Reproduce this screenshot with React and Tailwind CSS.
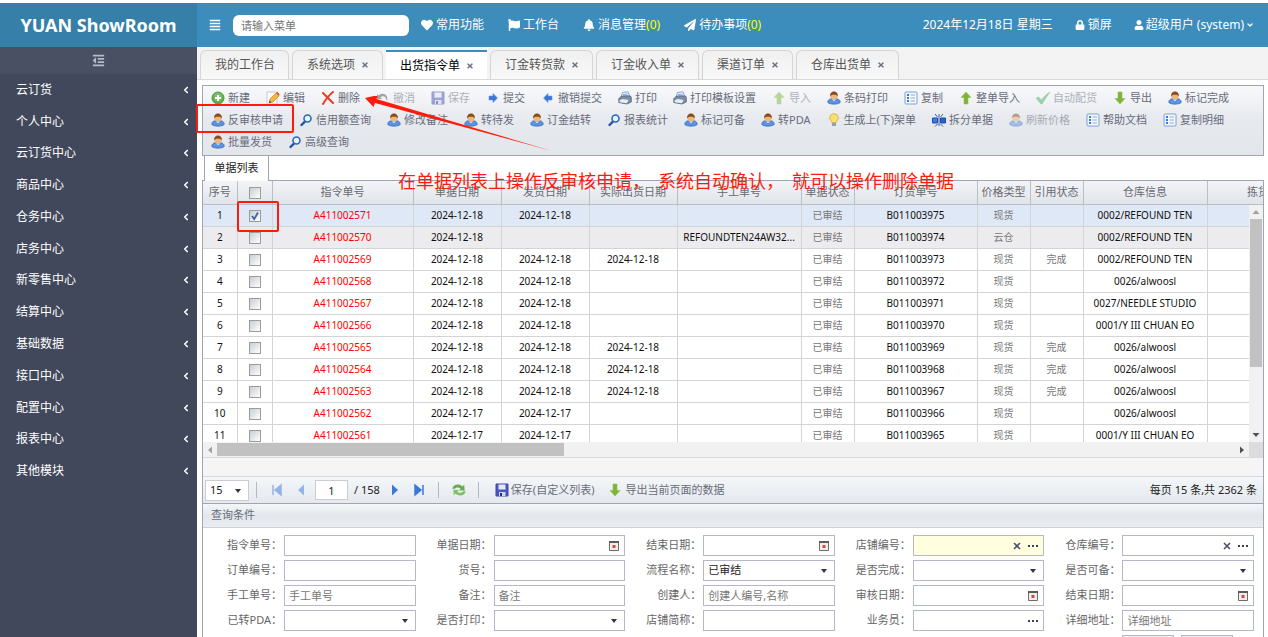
import React, { useState } from 'react';
import {
    FaAlignJustify, FaHeart, FaFlag, FaBell, FaPaperPlane, FaLock, FaUser, FaOutdent, FaTimes,
} from 'react-icons/fa';
import { ChevronDown, ChevronLeft } from 'lucide-react';

const menus = [
    '云订货', '个人中心', '云订货中心', '商品中心', '仓务中心', '店务中心', '新零售中心',
    '结算中心', '基础数据', '接口中心', '配置中心', '报表中心', '其他模块',
];

const tabs = ['我的工作台', '系统选项', '出货指令单', '订金转货款', '订金收入单', '渠道订单', '仓库出货单'];

const tools = [
    ['add', '新建'], ['edit', '编辑'], ['del', '删除'], ['undo', '撤消', true], ['save', '保存', true],
    ['right', '提交'], ['left', '撤销提交'], ['print', '打印'], ['print', '打印模板设置'], ['up', '导入', true],
    ['user', '条码打印'], ['list', '复制'], ['up', '整单导入'], ['check', '自动配货', true], ['down', '导出'],
    ['user', '标记完成'], ['user', '反审核申请'], ['search', '信用额查询'], ['user', '修改备注'],
    ['user', '转待发'], ['user', '订金结转'], ['search', '报表统计'], ['user', '标记可备'], ['user', '转PDA'],
    ['bulb', '生成上(下)架单'], ['split', '拆分单据'], ['user', '刷新价格', true], ['list', '帮助文档'],
    ['list', '复制明细'], ['user', '批量发货'], ['search', '高级查询'],
];

const columns = [
    '指令单号', '单据日期', '发货日期', '实际出货日期', '手工单号', '单据状态', '订货单号',
    '价格类型', '引用状态', '仓库信息', '拣货单号',
];

const rows = [
    ['A411002571', '2024-12-18', '2024-12-18', '', '', 'B011003975', '现货', '', '0002/REFOUND TEN'],
    ['A411002570', '2024-12-18', '', '', 'REFOUNDTEN24AW32...', 'B011003974', '云仓', '', '0002/REFOUND TEN'],
    ['A411002569', '2024-12-18', '2024-12-18', '2024-12-18', '', 'B011003973', '现货', '完成', '0002/REFOUND TEN'],
    ['A411002568', '2024-12-18', '2024-12-18', '', '', 'B011003972', '现货', '', '0026/alwoosl'],
    ['A411002567', '2024-12-18', '2024-12-18', '', '', 'B011003971', '现货', '', '0027/NEEDLE STUDIO'],
    ['A411002566', '2024-12-18', '2024-12-18', '', '', 'B011003970', '现货', '', '0001/Y III CHUAN EO'],
    ['A411002565', '2024-12-18', '2024-12-18', '2024-12-18', '', 'B011003969', '现货', '完成', '0026/alwoosl'],
    ['A411002564', '2024-12-18', '2024-12-18', '2024-12-18', '', 'B011003968', '现货', '完成', '0026/alwoosl'],
    ['A411002563', '2024-12-18', '2024-12-18', '2024-12-18', '', 'B011003967', '现货', '完成', '0026/alwoosl'],
    ['A411002562', '2024-12-17', '2024-12-17', '', '', 'B011003966', '现货', '', '0026/alwoosl'],
    ['A411002561', '2024-12-17', '2024-12-17', '', '', 'B011003965', '现货', '', '0001/Y III CHUAN EO'],
];

const fields = [
    { label: '指令单号' }, { label: '单据日期', kind: 'date' }, { label: '结束日期', kind: 'date' },
    { label: '店铺编号', kind: 'pick', clear: true, active: true }, { label: '仓库编号', kind: 'pick', clear: true },
    { label: '订单编号' }, { label: '货号' }, { label: '流程名称', kind: 'select', value: '已审结' },
    { label: '是否完成', kind: 'select' }, { label: '是否可备', kind: 'select' },
    { label: '手工单号', hint: '手工单号' }, { label: '备注', hint: '备注' }, { label: '创建人', hint: '创建人编号,名称' },
    { label: '审核日期', kind: 'date' }, { label: '结束日期', kind: 'date' },
    { label: '已转PDA', kind: 'select' }, { label: '是否打印', kind: 'select' }, { label: '店铺简称' },
    { label: '业务员', kind: 'pick' }, { label: '详细地址', hint: '详细地址' },
];

const drawings = {
    add: (
        <>
            <circle cx="7" cy="7" r="6" fill="#5cab4b" stroke="#4c9a44" />
            <circle cx="7" cy="6" r="4.500" fill="#8cca78" opacity=".6" />
            <path d="M7 4v6M4 7h6" stroke="#fff" strokeWidth="2" />
        </>
    ),
    edit: (
        <>
            <path d="M1 1h10v12H1z" fill="#fbfbfb" stroke="#c6c9cf" />
            <path d="M3 12l1-4 6-6 3 3-6 6z" fill="#f3b73c" stroke="#c98a1e" strokeWidth=".7" />
            <path d="M10 2l1.400-1.200 2.200 2.400L13 5z" fill="#e3564a" />
            <path d="M3 12l.7-2.400 1.700 1.700z" fill="#444" />
        </>
    ),
    del: <path d="M2 2c3 3 6 6 10 10M12 1C8 4 5 8 2 13" stroke="#ee3a24" strokeWidth="2" fill="none" strokeLinecap="round" />,
    undo: <path d="M1 3v5h5L4.300 6.300C7 4 10 5 11 10c2-5-3.500-10-8.500-5.500z" fill="#555" />,
    save: (
        <>
            <path d="M1 1h12v12H1z" fill="#4a55c4" stroke="#3d48ac" />
            <path d="M3.500 1.500h7v5h-7z" fill="#e4e9f8" />
            <path d="M4 9h6.500v4H4z" fill="#cfd4e8" />
            <path d="M5 10h2v3H5z" fill="#28307c" />
        </>
    ),
    right: <path d="M3 5h4V2.500L11.500 7 7 11.500V9H3z" fill="#3c73dd" stroke="#6a96e6" strokeWidth=".6" />,
    left: <path d="M11 5H7V2.500L2.500 7 7 11.500V9h4z" fill="#3c73dd" stroke="#6a96e6" strokeWidth=".6" />,
    print: (
        <>
            <path d="M4.500 1.500L10 .8 12 6H3z" fill="#f5f9ff" stroke="#7c8ea8" strokeWidth=".8" />
            <path d="M.8 7.500L4 5h8.500l.8 1.500V11L9 13 .8 11.500z" fill="#7f8da3" stroke="#54627a" strokeWidth=".8" />
            <path d="M1.500 9.500L4.500 8l6 1-1.700 3.300-7-1z" fill="#e4effc" />
            <path d="M5 3.500l4.500-.5M5 5l5.500-.5" stroke="#4e91d8" strokeWidth=".8" />
        </>
    ),
    up: <path d="M7 1l5 5.500H9V13H5V6.500H2z" fill="#7fb537" stroke="#8fbf55" strokeWidth=".6" />,
    down: <path d="M7 13l5-5.500H9V1H5v6.500H2z" fill="#7fb537" stroke="#8fbf55" strokeWidth=".6" />,
    user: (
        <>
            <path d="M.8 11.500c0-3 2-4 6.200-4s6.200 1 6.200 4c-2.500 2.200-9.900 2.200-12.400 0z" fill="#5b93e2" stroke="#2d61b4" strokeWidth=".7" />
            <path d="M5 8.500l2 1.500 2-1.500z" fill="#fff" />
            <circle cx="7" cy="5" r="3.600" fill="#efb67c" />
            <path d="M3.300 5.500C2.600 2 5 .4 7 .4S11.400 2 10.700 5.500C10 3.800 8.500 3.500 7 3.700 5 3.500 4 4 3.300 5.500z" fill="#8a4b1d" />
        </>
    ),
    list: (
        <>
            <rect x="1" y="1" width="12" height="12" rx="1" fill="#f4f9ff" stroke="#7f9fd0" />
            <path d="M3 4h2M3 7h2M3 10h2" stroke="#2f7de0" strokeWidth="2" />
            <path d="M6.500 4H11M6.500 7H11M6.500 10H11" stroke="#93a7c4" />
        </>
    ),
    check: <path d="M0 7l2.500-1L5.500 9C8 5.500 10.500 3 14 1 11 5 8.500 9 6 13H5z" fill="#46b35a" stroke="#2e9746" strokeWidth=".5" />,
    search: (
        <>
            <path d="M6 8.500L2.500 12" stroke="#1f52a0" strokeWidth="2.400" strokeLinecap="round" />
            <circle cx="8.500" cy="5.500" r="3.500" fill="#eaf3fd" stroke="#2c68bd" strokeWidth="1.600" />
        </>
    ),
    bulb: (
        <>
            <path d="M7 .8c2.600 0 4.300 1.900 4.300 4 0 2-1.800 3-2.100 4.700H4.800C4.500 7.800 2.700 6.800 2.700 4.800c0-2.100 1.700-4 4.300-4z" fill="#f9df6c" stroke="#d1a93a" strokeWidth=".8" />
            <path d="M5 10h4v3H5z" fill="#9aa0a8" />
        </>
    ),
    split: (
        <>
            <path d="M.5 5H5.500v5h-5z" fill="#3d7be6" stroke="#1c4db0" />
            <path d="M8.500 5h5v5h-5z" fill="#2b5fc9" stroke="#1c4db0" />
            <path d="M7 1v12M3 1l2.500 3M11 1L8.500 4M3 13.500L5.500 11M11 13.500L8.500 11" stroke="#3c5f92" />
        </>
    ),
    refresh: (
        <>
            <path d="M1 6c1-4 6-5 9-2l1.500-1.500.5 5H7l1.500-1.500C6.500 4.500 4.500 4.500 3.500 6z" fill="#63ad55" />
            <path d="M13 8c-1 4-6 5-9 2l-1.500 1.500L2 6.800l5 .2-1.500 1.500c2 1.500 4 1 5-.5z" fill="#7cc06b" />
        </>
    ),
    first: <path d="M3 2v10M11 2v10L5 7z" fill="#3c78dc" stroke="#3c78dc" strokeWidth="1.500" />,
    prev: <path d="M10 1.500v11L4 7z" fill="#3c78dc" />,
    next: <path d="M4 1.500v11l6-5.500z" fill="#3c78dc" />,
    last: <path d="M11 2v10M3 2v10l6-5z" fill="#3c78dc" stroke="#3c78dc" strokeWidth="1.500" />,
    date: (
        <>
            <path d="M2.500 2.500h9v9h-9z" fill="#f0eded" stroke="#6f6a6a" />
            <path d="M2 2h10v2H2z" fill="#5d5959" />
            <path d="M5.500 6h3v3h-3z" fill="#d9483b" />
        </>
    ),
    arrow: <path d="M4 5h6L7 9z" fill="#33344a" />,
    dots: <path d="M2 6h2v2H2zM6 6h2v2H6zM10 6h2v2h-2z" fill="#3c3f58" />,
    clear: <path d="M4 4l6 6M10 4l-6 6" stroke="#4d5169" strokeWidth="1.600" />,
};

const Icon = ({ name, className = 'size-3.5' }) => (
    <svg viewBox="0 0 14 14" fill="none" className={`shrink-0 ${className}`} aria-hidden="true">
        {drawings[name]}
    </svg>
);

const Check = ({ label, checked, onChange }) => (
    <span className="relative inline-flex size-3 align-middle">
        <input
            type="checkbox"
            aria-label={label}
            checked={checked}
            onChange={onChange}
            className="size-3 appearance-none border border-[#9b9b9b] bg-linear-to-br from-[#c9cdd2] to-white"
        />
        {checked && (
            <svg viewBox="0 0 12 12" className="pointer-events-none absolute inset-0 size-3">
                <path d="M3 6l2.200 3L9 2.500" fill="none" stroke="#43619c" strokeWidth="1.800" />
            </svg>
        )}
    </span>
);

const Sidebar = () => (
    <aside className="flex w-[197px] shrink-0 flex-col bg-[#42485b] text-white">
        <div className="flex h-11 items-center justify-center bg-[#367fa9] text-lg font-bold">YUAN ShowRoom</div>
        <button aria-label="收起菜单" className="flex h-[27px] items-center justify-center bg-[#4a5064] text-[#b4bac6]">
            <FaOutdent className="size-[13px]" />
        </button>
        <nav className="flex h-[413px] flex-col">
            {menus.map((item) => (
                <a key={item} href="#" className="flex flex-1 items-center justify-between pr-1.5 pl-4 text-xs">
                    {item}
                    <ChevronLeft className="size-2.5" strokeWidth={4} />
                </a>
            ))}
        </nav>
    </aside>
);

const TopBar = () => (
    <header className="flex h-11 items-center bg-[#3c8dbc] pr-3.5 pl-3 text-xs whitespace-nowrap text-white">
        <button aria-label="菜单"><FaAlignJustify className="size-3" /></button>
        <input
            aria-label="请输入菜单"
            placeholder="请输入菜单"
            className="ml-3 h-[21px] w-44 rounded-md bg-white px-2 text-[11px] text-gray-700 placeholder:text-[#757575]"
        />
        <nav className="ml-3 flex gap-6">
            <a href="#" className="flex items-center gap-[3px]"><FaHeart className="size-3" />常用功能</a>
            <a href="#" className="flex items-center gap-[3px]"><FaFlag className="size-3" />工作台</a>
            <a href="#" className="flex items-center gap-[3px]">
                <FaBell className="size-3" />
                <span>消息管理<span className="text-[#ffff00]">(0)</span></span>
            </a>
            <a href="#" className="flex items-center gap-[3px]">
                <FaPaperPlane className="size-3" />
                <span>待办事项<span className="text-[#ffff00]">(0)</span></span>
            </a>
        </nav>
        <div className="ml-auto flex gap-[22px]">
            <span>2024年12月18日 星期三</span>
            <a href="#" className="flex items-center gap-[3px]"><FaLock className="size-2.5" />锁屏</a>
            <a href="#" className="flex items-center gap-0.5">
                <FaUser className="size-2.5" />超级用户 (system)<ChevronDown className="size-2" strokeWidth={4} />
            </a>
        </div>
    </header>
);

const PageTabs = () => (
    <div className="flex h-[33px] items-end gap-[3px] border-b border-[#d9d9d9] bg-[#f3f3f3] pl-[3px]">
        {tabs.map((tab, i) => (
            <div
                key={tab}
                className={tab === '出货指令单'
                    ? 'flex h-[29px] items-center gap-1.5 border-t-2 border-[#3c8dbc] bg-white pr-[13px] pl-3.5 text-xs text-black'
                    : 'flex h-[29px] items-center gap-1.5 rounded-t-md border border-b-0 border-[#d5d5d5] bg-linear-to-b from-[#f0f0f0] to-[#f8f8f8] pr-[13px] pl-3.5 text-xs text-[#555]'}
            >
                <a href="#">{tab}</a>
                {i > 0 && <button aria-label={`关闭${tab}`} className="text-[#6b717d]"><FaTimes className="size-2" /></button>}
            </div>
        ))}
    </div>
);

const Toolbar = () => (
    <div className="flex flex-wrap border border-[#9ea6b3] bg-linear-to-b from-[#f8f9fb] via-[#e6e9ee] to-[#e3e6eb] pt-px pb-0.5 pl-2 text-[11px] text-[#686c7b]">
        {tools.map(([icon, text, disabled]) => (
            <button
                key={text}
                disabled={disabled}
                className="flex h-[22px] items-center gap-[3px] pr-4 whitespace-nowrap disabled:opacity-50"
            >
                <Icon name={icon} />
                {text}
            </button>
        ))}
    </div>
);

const OrderTable = () => {
    const [picked, setPicked] = useState(['A411002571']);

    const toggle = (id) => {
        setPicked(picked.includes(id) ? picked.filter((x) => x !== id) : [...picked, id]);
    };

    return (
        <div className="relative h-[262px] overflow-hidden border-t border-[#9ea6b3]">
            <table className="w-[1128px] table-fixed border-collapse text-center text-[10px] whitespace-nowrap text-[#111]">
                <colgroup>
                    <col className="w-[34px]" /><col className="w-[35px]" /><col className="w-[141px]" />
                    <col className="w-[88px]" /><col className="w-[88px]" /><col className="w-[88px]" />
                    <col className="w-[124px]" /><col className="w-[53px]" /><col className="w-[123px]" />
                    <col className="w-[53px]" /><col className="w-[53px]" /><col className="w-[124px]" />
                    <col className="w-[124px]" />
                </colgroup>
                <thead>
                    <tr className="h-[23px] bg-linear-to-b from-[#f3f4f8] to-[#e0e5ea] text-[11px] text-[#6a6a72]">
                        <th className="border-r border-b border-[#b9bec7] font-normal">序号</th>
                        <th className="border-r border-b border-[#b9bec7]"><Check label="全选" checked={false} onChange={() => {}} /></th>
                        {columns.map((name) => (
                            <th key={name} className="border-r border-b border-[#b9bec7] font-normal">{name}</th>
                        ))}
                    </tr>
                </thead>
                <tbody>
                    {rows.map(([id, made, sent, real, manual, order, price, quote, store], i) => (
                        <tr
                            key={id}
                            className="h-[22px] first:bg-[#dfe8f6] nth-2:bg-[#ececee] [&>td]:border-r [&>td]:border-b [&>td]:border-[#d4d4d4]"
                        >
                            <td>{i + 1}</td>
                            <td><Check label={id} checked={picked.includes(id)} onChange={() => toggle(id)} /></td>
                            <td className="text-[#ff0000]">{id}</td>
                            <td>{made}</td>
                            <td>{sent}</td>
                            <td>{real}</td>
                            <td>{manual}</td>
                            <td className="text-[#777]">已审结</td>
                            <td>{order}</td>
                            <td className="text-[#777]">{price}</td>
                            <td className="text-[#777]">{quote}</td>
                            <td>{store}</td>
                            <td />
                        </tr>
                    ))}
                </tbody>
            </table>
            <div className="absolute top-6 right-0 bottom-0 flex w-3.5 flex-col items-center bg-[#f1f1f1]">
                <svg viewBox="0 0 14 14" className="size-3.5"><path d="M3.500 9h7L7 5z" fill="#a0a0a0" /></svg>
                <div className="h-[148px] w-3 bg-[#c1c1c1]" />
                <svg viewBox="0 0 14 14" className="mt-auto size-3.5"><path d="M3.500 5h7L7 9z" fill="#505050" /></svg>
            </div>
        </div>
    );
};

const Pager = () => (
    <div className="flex h-[27px] items-center border-t border-[#d5d8dc] bg-linear-to-b from-[#f4f7f9] to-[#e5e8ed] pr-1.5 pl-0.5 text-[11px] whitespace-nowrap text-[#222]">
        <div className="relative flex">
            <select aria-label="每页条数" className="h-[21px] w-11 appearance-none border border-[#c9ccd2] bg-white pl-1">
                <option>15</option>
            </select>
            <Icon name="arrow" className="pointer-events-none absolute top-1 right-1 size-3.5" />
        </div>
        <span className="mx-[7px] h-4 w-px bg-[#b4b8c0]" />
        <button aria-label="首页" className="ml-1.5 opacity-50"><Icon name="first" /></button>
        <button aria-label="上一页" className="ml-2.5 opacity-50"><Icon name="prev" /></button>
        <input aria-label="页码" defaultValue="1" className="ml-[7px] h-5 w-[33px] border border-[#c9ccd2] bg-white text-center" />
        <span className="ml-1.5">/ 158</span>
        <button aria-label="下一页" className="ml-2"><Icon name="next" /></button>
        <button aria-label="末页" className="ml-2.5"><Icon name="last" /></button>
        <span className="mx-3 h-4 w-px bg-[#b4b8c0]" />
        <button aria-label="刷新"><Icon name="refresh" className="size-4" /></button>
        <span className="mr-3 ml-[11px] h-4 w-px bg-[#b4b8c0]" />
        <button className="ml-1 flex items-center gap-0.5 text-[#686c7b]"><Icon name="save" />保存(自定义列表)</button>
        <button className="ml-3.5 flex items-center gap-[3px] text-[#686c7b]"><Icon name="down" />导出当前页面的数据</button>
        <span className="ml-auto">每页 15 条,共 2362 条</span>
    </div>
);

const Field = ({ id, field }) => {
    const box = `h-[21px] w-full appearance-none border border-[#b5b8c8] px-1 text-[11px] text-[#222] placeholder:text-[#777] ${field.active ? 'bg-[#ffffe0]' : 'bg-white'}`;
    return (
        <div className="flex items-center">
            <label htmlFor={id} className="w-[78px] shrink-0 pr-0.5 text-right text-[11px] whitespace-nowrap text-[#666]">
                {field.label}：
            </label>
            <div className="relative flex min-w-0 flex-1">
                {field.kind === 'select' ? (
                    <select id={id} className={box}><option>{field.value}</option></select>
                ) : (
                    <input id={id} placeholder={field.hint} className={box} />
                )}
                <span className="pointer-events-none absolute inset-y-0 right-1 flex items-center gap-0.5">
                    {field.clear && <Icon name="clear" />}
                    {field.kind === 'pick' && <Icon name="dots" />}
                    {field.kind === 'date' && <Icon name="date" />}
                    {field.kind === 'select' && <Icon name="arrow" />}
                </span>
            </div>
        </div>
    );
};

const QueryForm = () => (
    <form className="flex min-h-0 flex-1 flex-col overflow-hidden border-t border-[#9ea6b3]">
        <h2 className="flex h-6 shrink-0 items-center border-b border-[#cfd3d9] bg-linear-to-b from-[#f4f7f9] via-[#e3e7ec] to-[#e9edf0] pl-2 text-[11px] text-[#686c7b]">
            查询条件
        </h2>
        <div className="grid grid-cols-5 gap-y-1 pt-[7px] pr-[9px] pl-[3px]">
            {fields.map((field, i) => (
                <Field key={i} id={`field-${i}`} field={field} />
            ))}
            <div className="col-start-5 flex gap-[7px] pl-[78px]">
                <button type="submit" aria-label="查询" className="h-5 w-[52px] border border-[#b5b8c8] bg-[#eceef2]" />
                <button type="reset" aria-label="重置" className="h-5 w-[52px] border border-[#b5b8c8] bg-[#eceef2]" />
            </div>
        </div>
    </form>
);

// red marks that explain the steps, drawn over the whole page
const Notes = () => (
    <div className="pointer-events-none absolute inset-0">
        <div className="absolute top-[104px] left-[196px] h-[29px] w-[98px] rounded-xs border-2 border-[#fe1b0b]" />
        <div className="absolute top-[201px] left-[237px] h-[31px] w-[42px] rounded-xs border-2 border-[#fe1b0b]" />
        <svg viewBox="0 0 190 56" className="absolute top-[96px] left-[364px] h-14 w-[190px]">
            <path d="M1 2L14-1 12.500 3 188 55 11 7 9.500 11z" fill="#fe1b0b" />
        </svg>
        <p className="absolute top-[168px] left-[398px] flex gap-2 text-lg leading-[26px] whitespace-nowrap text-[#fe1b0b]">
            <span>在单据列表上操作反审核申请，</span>
            <span>系统自动确认，</span>
            <span>就可以操作删除单据</span>
        </p>
    </div>
);

const App = () => {
    return (
        <div className="relative flex h-screen flex-col overflow-hidden bg-white pt-[3px] font-['Noto_Sans','Noto_Sans_CJK_SC',sans-serif]">
            <div className="flex min-h-0 flex-1">
                <Sidebar />
                <div className="flex min-w-0 flex-1 flex-col">
                    <TopBar />
                    <PageTabs />
                    <main className="flex min-h-0 flex-1 flex-col pt-[5px] pr-1 pl-[5px]">
                        <Toolbar />
                        <div className="flex h-6 shrink-0 pl-0.5">
                            <button className="relative z-10 -mb-px w-[65px] border-x border-[#9ea6b3] bg-white text-[11px] text-[#222]">
                                单据列表
                            </button>
                        </div>
                        <section className="flex min-h-0 flex-1 flex-col border-x border-[#9ea6b3]">
                            <OrderTable />
                            <div className="flex h-4 shrink-0 items-center border-b border-[#d9d9d9] bg-[#f1f1f1]">
                                <svg viewBox="0 0 14 14" className="size-3.5"><path d="M9 3.500v7L5 7z" fill="#a0a0a0" /></svg>
                                <div className="h-[13px] w-[347px] bg-[#c1c1c1]" />
                                <svg viewBox="0 0 14 14" className="ml-auto size-3.5"><path d="M5 3.500v7L9 7z" fill="#505050" /></svg>
                                <div className="h-full w-3.5 bg-[#dcdcdc]" />
                            </div>
                            <div className="h-[18px] shrink-0 bg-[#f5f5f5]" />
                            <Pager />
                            <QueryForm />
                        </section>
                    </main>
                </div>
            </div>
            <Notes />
        </div>
    );
};

export default App;
